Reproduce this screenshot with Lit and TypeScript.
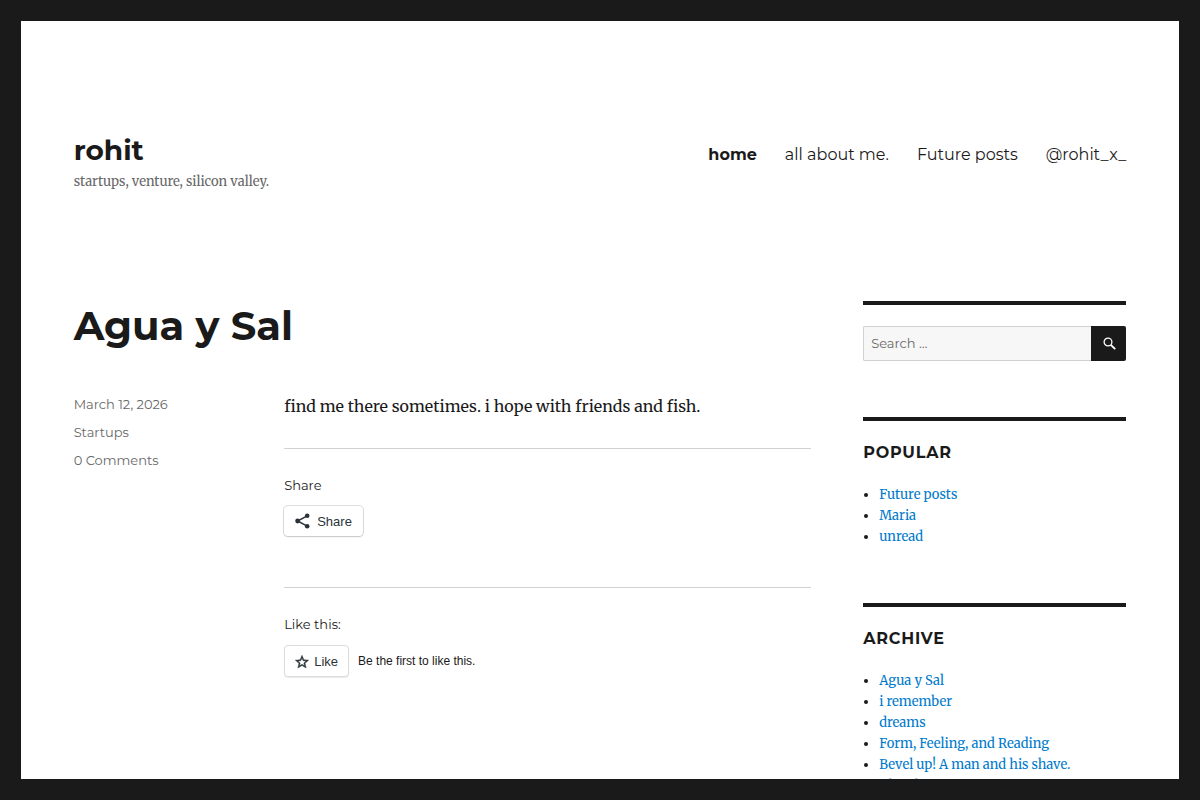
import { LitElement, html, css } from "lit";
import { customElement, property } from "lit/decorators.js";

const NAV = [
  { label: "home", current: true },
  { label: "all about me.", current: false },
  { label: "Future posts", current: false },
  { label: "@rohit_x_", current: false },
];

const POPULAR = ["Future posts", "Maria", "unread"];

const ARCHIVE = [
  "Agua y Sal",
  "i remember",
  "dreams",
  "Form, Feeling, and Reading",
  "Bevel up! A man and his shave.",
  "Ahead",
];

@customElement("link-widget")
export class LinkWidget extends LitElement {
  @property() heading = "";
  @property({ attribute: false }) items: string[] = [];

  static styles = css`
    :host {
      display: block;
      border-top: 4px solid #1a1a1a;
      padding-top: 21px;
    }
    .title {
      margin: 0 0 21px;
      font: 700 16px/21px Montserrat, "Open Sans", sans-serif;
      letter-spacing: 0.05em;
      text-transform: uppercase;
    }
    .list {
      margin: 0;
      padding: 0 0 0 16px;
      font: 13px/21px Merriweather, "Noto Serif", serif;
    }
    .link {
      color: #007acc;
      text-decoration: none;
    }
    .link:hover {
      color: #686868;
    }
  `;

  render() {
    return html`
      <h2 class="title">${this.heading}</h2>
      <ul class="list">
        ${this.items.map((item) => html`<li><a class="link" href="#">${item}</a></li>`)}
      </ul>
    `;
  }
}

@customElement("search-widget")
export class SearchWidget extends LitElement {
  static styles = css`
    :host {
      display: block;
      border-top: 4px solid #1a1a1a;
      padding-top: 21px;
    }
    .form {
      display: flex;
      height: 35px;
    }
    .field {
      flex: 1;
      min-width: 0;
      box-sizing: border-box;
      padding: 0 7px 2px;
      border: 1px solid #d1d1d1;
      border-right: 0;
      border-radius: 2px 0 0 2px;
      background: #f7f7f7;
      color: #686868;
      font: 13px Montserrat, "Open Sans", sans-serif;
    }
    .field::placeholder {
      color: #686868;
      opacity: 1;
    }
    .submit {
      display: grid;
      place-items: center;
      width: 35px;
      padding: 0;
      border: 0;
      border-radius: 0 2px 2px 0;
      background: #1a1a1a;
      color: #fff;
    }
  `;

  render() {
    return html`
      <form class="form" role="search" @submit=${(e: Event) => e.preventDefault()}>
        <input class="field" type="search" placeholder="Search …" aria-label="Search for:" />
        <button class="submit" type="submit" aria-label="Search">
          <svg width="16" height="16" viewBox="0 0 16 16" fill="none" stroke="currentColor">
            <circle cx="7" cy="6" r="3.9" stroke-width="1.3" />
            <path d="M9.8 8.8 14.2 13.2" stroke-width="1.9" />
          </svg>
        </button>
      </form>
    `;
  }
}

@customElement("app-root")
export class AppRoot extends LitElement {
  static styles = css`
    :host {
      display: block;
      box-sizing: border-box;
      min-height: 100vh;
      padding: 21px;
      background: #1a1a1a;
      color: #1a1a1a;
      font: 16px/28px Merriweather, "Noto Serif", serif;
    }
    /* The dark frame stays at the window's edges while the page scrolls. */
    :host::before,
    :host::after {
      content: "";
      position: fixed;
      left: 0;
      right: 0;
      z-index: 1;
      height: 21px;
      background: #1a1a1a;
    }
    :host::before {
      top: 0;
    }
    :host::after {
      bottom: 0;
    }
    .site {
      min-height: calc(100vh - 42px);
      box-sizing: border-box;
      padding: 0 calc(100% / 22) 56px;
      background: #fff;
    }
    .header {
      display: flex;
      align-items: baseline;
      justify-content: space-between;
      gap: 28px;
      padding: 112px 0;
    }
    .site-title {
      margin: 0;
      font: 700 28px/35px Montserrat, "Open Sans", sans-serif;
    }
    .site-title a,
    .menu a,
    .meta a {
      color: inherit;
      text-decoration: none;
    }
    .description {
      margin: 7px 0 0;
      color: #686868;
      font-size: 13px;
      line-height: 14px;
    }
    .menu {
      display: flex;
      flex-wrap: wrap;
      gap: 0 28px;
      font: 16px/21px Montserrat, "Open Sans", sans-serif;
    }
    .menu .current {
      font-weight: 700;
    }
    .columns {
      display: grid;
      grid-template-columns: minmax(0, 1fr) 25%;
      column-gap: 5%;
      row-gap: 56px;
      align-items: start;
    }
    .entry-title {
      margin: 0 0 42px;
      font: 700 40px/49px Montserrat, "Open Sans", sans-serif;
    }
    .entry {
      display: grid;
      grid-template-columns: 2fr 5fr;
      align-items: start;
    }
    .meta {
      display: grid;
      gap: 7px;
      padding-top: 2px;
      color: #686868;
      font: 13px/21px Montserrat, "Open Sans", sans-serif;
    }
    .text {
      margin: 0 0 28px;
    }
    .block {
      border-top: 1px solid #d1d1d1;
      padding: 28px 0 51px;
    }
    .block-title {
      margin: 0 0 13px;
      font: 13px/16px Montserrat, "Open Sans", sans-serif;
    }
    .share,
    .like {
      display: flex;
      align-items: center;
      border-radius: 4px;
      background: #fff;
      color: #2c3338;
      font: 13px "Liberation Sans", Arial, sans-serif;
    }
    .share {
      gap: 6px;
      height: 30px;
      padding: 0 11px 0 10px;
      border: 0;
      box-shadow: 0 1px 2px rgba(0, 0, 0, 0.12), 0 0 0 1px rgba(0, 0, 0, 0.12);
    }
    .like {
      gap: 4px;
      height: 32px;
      padding: 0 10px 0 9px;
      border: 1px solid #dcdcde;
      box-shadow: 0 1px 1px rgba(0, 0, 0, 0.08);
    }
    .likes {
      display: flex;
      align-items: center;
      gap: 9px;
      font: 12px/17px "Liberation Sans", Arial, sans-serif;
    }
    .sidebar {
      display: grid;
      gap: 56px;
    }
    @media (max-width: 900px) {
      .columns {
        grid-template-columns: minmax(0, 1fr);
      }
    }
  `;

  render() {
    return html`
      <div class="site">
        <header class="header">
          <div>
            <p class="site-title"><a href="#">rohit</a></p>
            <p class="description">startups, venture, silicon valley.</p>
          </div>
          <nav class="menu" aria-label="Primary Menu">
            ${NAV.map((n) => html`<a class=${n.current ? "current" : ""} href="#">${n.label}</a>`)}
          </nav>
        </header>
        <div class="columns">
          <main>
            <article>
              <h1 class="entry-title">Agua y Sal</h1>
              <div class="entry">
                <footer class="meta">
                  <a href="#"><time datetime="2026-03-12">March 12, 2026</time></a>
                  <a href="#">Startups</a>
                  <a href="#">0 Comments</a>
                </footer>
                <div>
                  <p class="text">find me there sometimes. i hope with friends and fish.</p>
                  <section class="block">
                    <h3 class="block-title">Share</h3>
                    <button class="share" type="button">
                      <svg width="17" height="18" viewBox="0 0 17 18" fill="#2c3338" stroke="#2c3338">
                        <path d="M13.2 3.8 3.6 9l9.6 5.2" fill="none" stroke-width="1.5" />
                        <circle cx="13.2" cy="3.8" r="2.3" stroke="none" />
                        <circle cx="3.6" cy="9" r="2.4" stroke="none" />
                        <circle cx="13.2" cy="14.2" r="2.3" stroke="none" />
                      </svg>
                      <span>Share</span>
                    </button>
                  </section>
                  <section class="block">
                    <h3 class="block-title">Like this:</h3>
                    <div class="likes">
                      <button class="like" type="button">
                        <svg width="16" height="16" viewBox="0 -1.5 24 24" fill="#2c3338" stroke="#2c3338" stroke-width="0.7">
                          <path
                            d="M22 9.24l-7.19-.62L12 2 9.19 8.63 2 9.24l5.46 4.73L5.82 21 12 17.27 18.18 21l-1.63-7.03L22 9.24zM12 15.4l-3.76 2.27 1-4.28-3.32-2.88 4.38-.38L12 6.1l1.71 4.04 4.38.38-3.32 2.88 1 4.28L12 15.4z"
                          />
                        </svg>
                        <span>Like</span>
                      </button>
                      <span>Be the first to like this.</span>
                    </div>
                  </section>
                </div>
              </div>
            </article>
          </main>
          <aside class="sidebar">
            <search-widget></search-widget>
            <link-widget heading="Popular" .items=${POPULAR}></link-widget>
            <link-widget heading="Archive" .items=${ARCHIVE}></link-widget>
          </aside>
        </div>
      </div>
    `;
  }
}
